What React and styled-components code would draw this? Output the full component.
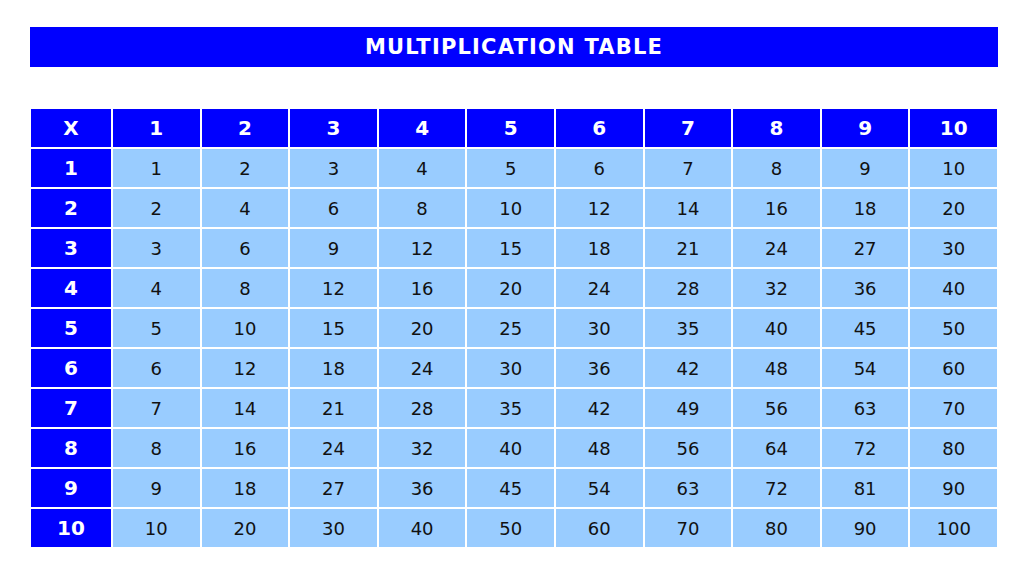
import React from 'react';
import styled, { createGlobalStyle } from 'styled-components';

const GlobalStyle = createGlobalStyle`
  html, body {
    margin: 0;
    padding: 0;
    background: #fff;
    font-family: "DejaVu Sans", Verdana, sans-serif;
  }
`;

const Page = styled.div`
  width: 1024px;
  height: 576px;
  padding: 27px 0 0 30px;
  box-sizing: border-box;
  overflow: hidden;
`;

const TitleBar = styled.div`
  width: 968px;
  height: 40px;
  background: #0000ff;
  color: #fff;
  display: flex;
  align-items: center;
  justify-content: center;
  font-size: 21px;
  font-weight: 700;
  letter-spacing: 1.2px;
`;

const Grid = styled.div`
  margin: 42px 0 0 1px;
  width: 966px;
  display: grid;
  grid-template-columns: 80px repeat(10, 1fr);
  grid-auto-rows: 38px;
  gap: 2px;
`;

const Cell = styled.div`
  display: flex;
  align-items: center;
  justify-content: center;
  background: ${({ $head }) => ($head ? '#0000ff' : '#99ccff')};
  color: ${({ $head }) => ($head ? '#fff' : '#111')};
  font-size: ${({ $head }) => ($head ? '20px' : '18px')};
  font-weight: ${({ $head }) => ($head ? 700 : 400)};
`;

const nums = [1, 2, 3, 4, 5, 6, 7, 8, 9, 10];

export default function App() {
  return (
    <>
      <GlobalStyle />
      <Page>
        <TitleBar>MULTIPLICATION TABLE</TitleBar>
        <Grid>
          <Cell $head>X</Cell>
          {nums.map((n) => (
            <Cell $head key={`h${n}`}>{n}</Cell>
          ))}
          {nums.map((r) => (
            <React.Fragment key={r}>
              <Cell $head>{r}</Cell>
              {nums.map((c) => (
                <Cell key={c}>{r * c}</Cell>
              ))}
            </React.Fragment>
          ))}
        </Grid>
      </Page>
    </>
  );
}
